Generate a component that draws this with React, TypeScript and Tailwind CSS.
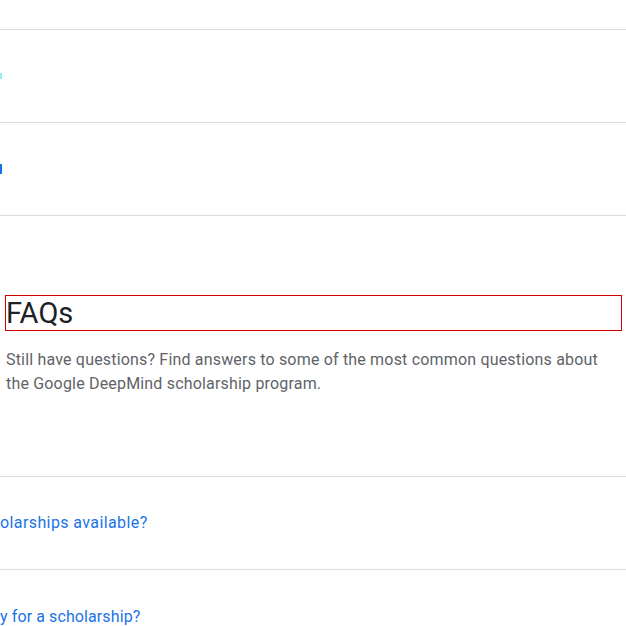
export default function App() {
  return (
    <div
      className="w-[626px] h-[626px] overflow-hidden bg-white"
      style={{ fontFamily: "Roboto, 'Open Sans', Arial, sans-serif" }}
    >
      <div className="h-[30px] border-b border-[#dadce0]" />
      <div className="h-[93px] border-b border-[#dadce0] flex items-center">
        <span className="block w-[2px] h-[6px] bg-[#8ff3f3]" />
      </div>
      <div className="h-[93px] border-b border-[#dadce0] flex items-center">
        <span className="block w-[2px] h-[10px] bg-[#1a73e8]" />
      </div>
      <section className="pt-[79px] pb-[80px] pl-[5px] pr-[4px] border-b border-[#dadce0]">
        <h2 className="border border-[#d40000] text-[29px] leading-[34px] text-[#202124] font-normal">
          FAQs
        </h2>
        <p className="mt-[17px] pl-[1px] text-[16px] leading-[24px] text-[#5f6368] tracking-[0.18px]">
          Still have questions? Find answers to some of the most common questions about
          <br />
          the Google DeepMind scholarship program.
        </p>
      </section>
      <div className="h-[93px] border-b border-[#dadce0] flex items-center">
        <span className="text-[16px] leading-[24px] text-[#1a73e8] tracking-[0.4px]">
          olarships available?
        </span>
      </div>
      <div className="h-[93px] flex items-center">
        <span className="text-[16px] leading-[24px] text-[#1a73e8] tracking-[0.1px]">
          y for a scholarship?
        </span>
      </div>
    </div>
  );
}
